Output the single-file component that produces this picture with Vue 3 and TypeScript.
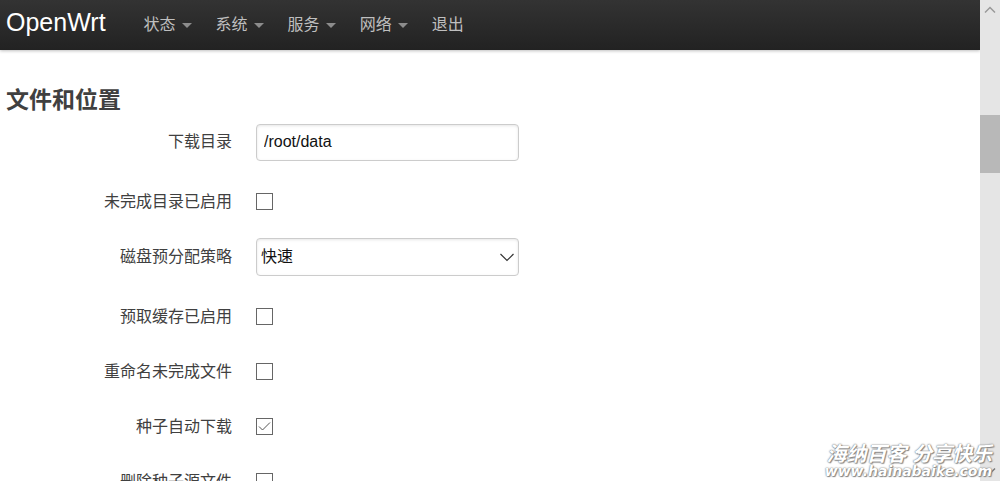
<script setup lang="ts">
import { ref } from 'vue'

interface MenuItem {
  label: string
  dropdown: boolean
}

interface Field {
  id: string
  label: string
  kind: 'text' | 'check' | 'select'
  text?: string
  checked?: boolean
  options?: string[]
}

const menu: MenuItem[] = [
  { label: '状态', dropdown: true },
  { label: '系统', dropdown: true },
  { label: '服务', dropdown: true },
  { label: '网络', dropdown: true },
  { label: '退出', dropdown: false },
]

const fields = ref<Field[]>([
  { id: 'download-dir', label: '下载目录', kind: 'text', text: '/root/data' },
  { id: 'incomplete-dir', label: '未完成目录已启用', kind: 'check', checked: false },
  { id: 'preallocation', label: '磁盘预分配策略', kind: 'select', text: '快速', options: ['快速'] },
  { id: 'prefetch', label: '预取缓存已启用', kind: 'check', checked: false },
  { id: 'rename-partial', label: '重命名未完成文件', kind: 'check', checked: false },
  { id: 'start-added', label: '种子自动下载', kind: 'check', checked: true },
  { id: 'trash-original', label: '删除种子源文件', kind: 'check', checked: false },
])
</script>

<template>
  <div class="window">
    <div class="page">
      <header class="bar">
        <a class="brand" href="#">OpenWrt</a>
        <nav class="menu">
          <a v-for="item in menu" :key="item.label" class="menu-link" href="#">
            {{ item.label }}<span v-if="item.dropdown" class="caret"></span>
          </a>
        </nav>
      </header>
      <main class="content">
        <h3 class="title">文件和位置</h3>
        <form class="form">
          <div v-for="field in fields" :key="field.id" class="row" :class="field.kind">
            <label class="label" :for="field.id">{{ field.label }}</label>
            <input v-if="field.kind === 'text'" :id="field.id" v-model="field.text" class="control" type="text" />
            <span v-else-if="field.kind === 'select'" class="select-wrap">
              <select :id="field.id" v-model="field.text" class="control">
                <option v-for="option in field.options" :key="option">{{ option }}</option>
              </select>
              <svg class="arrow" width="14" height="9" viewBox="0 0 14 9" aria-hidden="true">
                <path d="M0.5 1 L7 7.5 L13.5 1" fill="none" stroke="#333" stroke-width="1.2" />
              </svg>
            </span>
            <span v-else class="check-wrap">
              <input :id="field.id" v-model="field.checked" class="box" type="checkbox" />
              <svg v-if="field.checked" class="tick" width="17" height="17" viewBox="0 0 17 17" aria-hidden="true">
                <path d="M3 8.5 L6.5 12 L14 4.5" fill="none" stroke="#555" stroke-width="1" />
              </svg>
            </span>
          </div>
        </form>
      </main>
    </div>
    <div class="scrollbar">
      <svg class="up" width="12" height="8" viewBox="0 0 12 8" aria-hidden="true">
        <path d="M1 6.5 L6 1.5 L11 6.5" fill="none" stroke="#999" stroke-width="1.5" />
      </svg>
      <div class="thumb"></div>
      <svg class="down" width="12" height="8" viewBox="0 0 12 8" aria-hidden="true">
        <path d="M1 1.5 L6 6.5 L11 1.5" fill="none" stroke="#777" stroke-width="1.5" />
      </svg>
    </div>
    <div class="watermark">
      <span class="mark-name">海纳百客 分享快乐</span>
      <span class="mark-site">www.hainabaike.com</span>
    </div>
  </div>
</template>

<style>
body {
  margin: 0;
  background: #fff;
}
</style>

<style scoped>
.window {
  position: relative;
  display: flex;
  height: 100vh;
  overflow: hidden;
  color: #404040;
  font: 16px/24px "Liberation Sans", "Noto Sans CJK SC", sans-serif;
}

.page {
  flex: 1;
  min-width: 0;
}

.bar {
  display: flex;
  height: 50px;
  background: linear-gradient(#333, #222);
  box-shadow: 0 1px 3px rgba(0, 0, 0, 0.25);
}

.brand {
  padding: 7px 26px 0 6px;
  color: #fff;
  font-size: 25px;
  line-height: 30px;
  text-decoration: none;
}

.menu {
  display: flex;
}

.menu-link {
  display: flex;
  align-items: center;
  gap: 6px;
  padding: 0 12px;
  color: #bfbfbf;
  text-decoration: none;
}

.caret {
  border: 5px solid transparent;
  border-top-color: #8c8c8c;
  border-bottom: 0;
}

.content {
  padding: 32px 6px 0;
}

.title {
  margin: 0;
  font-size: 23px;
  line-height: 36px;
}

.form {
  display: flex;
  flex-direction: column;
  gap: 22px;
  padding-top: 5px;
}

.row {
  display: flex;
  align-items: center;
  gap: 24px;
  box-sizing: border-box;
  height: 38px;
}

.row.check {
  height: 33px;
  padding-top: 3px;
}

.label {
  width: 226px;
  text-align: right;
}

.check .label {
  padding-top: 2px;
}

.control {
  box-sizing: border-box;
  width: 263px;
  height: 38px;
  padding: 0 7px;
  border: 1px solid #ccc;
  border-radius: 4px;
  background: #fff;
  box-shadow: inset 0 1px 3px rgba(0, 0, 0, 0.1);
  color: #111;
  font: inherit;
  appearance: none;
}

.text .control {
  height: 37px;
}

select.control {
  padding: 0 4px;
}

.select-wrap,
.check-wrap {
  position: relative;
  display: flex;
}

.arrow {
  position: absolute;
  right: 5px;
  top: 15px;
  pointer-events: none;
}

.box {
  width: 17px;
  height: 17px;
  margin: 0;
  border: 1px solid #666;
  background: #fff;
  appearance: none;
}

.tick {
  position: absolute;
  left: 0;
  top: 0;
  pointer-events: none;
}

.scrollbar {
  display: flex;
  flex-direction: column;
  align-items: center;
  width: 20px;
  background: #e5e5e5;
}

.up {
  margin: 6px 0 101px;
}

.thumb {
  width: 100%;
  height: 58px;
  background: #b8b8b8;
}

.down {
  margin: auto 0 6px;
}

.watermark {
  position: absolute;
  right: 8px;
  bottom: 3px;
  display: flex;
  flex-direction: column;
  color: #fff;
  font-style: italic;
  font-weight: bold;
  text-align: right;
  white-space: nowrap;
  text-shadow: 0 0 1px #777, 0 0 2px #888, 1px 1px 1px #888;
}

.mark-name {
  font-size: 20px;
  line-height: 20px;
}

.mark-site {
  font-family: "DejaVu Sans", sans-serif;
  font-size: 14px;
  line-height: 14px;
}
</style>
